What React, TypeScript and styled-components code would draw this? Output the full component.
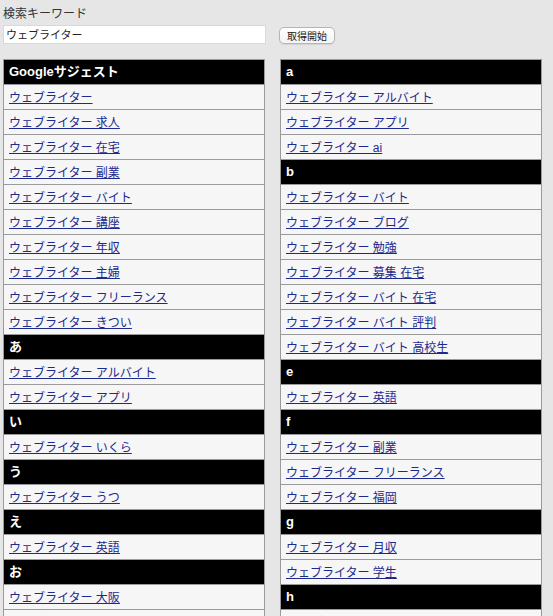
import React from "react";
import styled, { createGlobalStyle } from "styled-components";

const Global = createGlobalStyle`
  html, body { margin: 0; padding: 0; background: #e6e6e6; }
  body { font-family: "Liberation Sans", "Noto Sans CJK JP", sans-serif; color: #333; }
`;

const Page = styled.div`
  padding: 6px 3px 0 3px;
`;

const Label = styled.div`
  font-size: 12px;
  line-height: 16px;
  color: #333;
  margin-bottom: 2px;
`;

const SearchBar = styled.div`
  display: flex;
  align-items: center;
  gap: 13px;
`;

const Input = styled.input`
  box-sizing: border-box;
  width: 263px;
  height: 19px;
  border: 1px solid #d9d9d9;
  background: #fff;
  padding: 0 2px;
  font-family: "Liberation Sans", "Noto Sans CJK JP", sans-serif;
  font-size: 11px;
  color: #222;
  outline: none;
`;

const Button = styled.button`
  box-sizing: border-box;
  margin-top: 3px;
  width: 56px;
  height: 17px;
  padding: 0;
  border: 1px solid #b5b5b5;
  border-radius: 5px;
  background: linear-gradient(#ffffff, #f4f4f4);
  box-shadow: 0 1px 1px rgba(0, 0, 0, 0.08);
  font-family: "Liberation Sans", "Noto Sans CJK JP", sans-serif;
  font-size: 10px;
  color: #222;
`;

const Columns = styled.div`
  display: flex;
  align-items: flex-start;
  gap: 15px;
  margin-top: 15px;
`;

const Table = styled.div`
  box-sizing: border-box;
  width: 262px;
  border: 1px solid #9a9a9a;
  border-bottom: none;
`;

const Row = styled.div<{ $head?: boolean }>`
  box-sizing: border-box;
  height: 25px;
  line-height: 24px;
  padding: ${(p) => (p.$head ? "0 5px" : "1px 5px 0")};
  border-bottom: 1px solid #9a9a9a;
  background: ${(p) => (p.$head ? "#000" : "#f6f6f6")};
  color: ${(p) => (p.$head ? "#fff" : "#333")};
  font-size: ${(p) => (p.$head ? "13px" : "12px")};
  font-weight: ${(p) => (p.$head ? "bold" : "normal")};
  white-space: nowrap;
  overflow: hidden;
`;

const Link = styled.a`
  color: #1c2a8e;
  text-decoration: underline;
  text-underline-offset: 1px;
`;

type Item = { h?: string; t?: string };

const W = "ウェブライター";

const left: Item[] = [
  { h: "Googleサジェスト" },
  { t: "" },
  { t: " 求人" },
  { t: " 在宅" },
  { t: " 副業" },
  { t: " バイト" },
  { t: " 講座" },
  { t: " 年収" },
  { t: " 主婦" },
  { t: " フリーランス" },
  { t: " きつい" },
  { h: "あ" },
  { t: " アルバイト" },
  { t: " アプリ" },
  { h: "い" },
  { t: " いくら" },
  { h: "う" },
  { t: " うつ" },
  { h: "え" },
  { t: " 英語" },
  { h: "お" },
  { t: " 大阪" },
  { t: " 沖縄" },
];

const right: Item[] = [
  { h: "a" },
  { t: " アルバイト" },
  { t: " アプリ" },
  { t: " ai" },
  { h: "b" },
  { t: " バイト" },
  { t: " ブログ" },
  { t: " 勉強" },
  { t: " 募集 在宅" },
  { t: " バイト 在宅" },
  { t: " バイト 評判" },
  { t: " バイト 高校生" },
  { h: "e" },
  { t: " 英語" },
  { h: "f" },
  { t: " 副業" },
  { t: " フリーランス" },
  { t: " 福岡" },
  { h: "g" },
  { t: " 月収" },
  { t: " 学生" },
  { h: "h" },
  { t: " 働き方" },
];

const List = ({ items }: { items: Item[] }) => (
  <Table>
    {items.map((it, i) =>
      it.h !== undefined ? (
        <Row key={i} $head>
          {it.h}
        </Row>
      ) : (
        <Row key={i}>
          <Link href="#">{W + it.t}</Link>
        </Row>
      )
    )}
  </Table>
);

export default function App() {
  return (
    <>
      <Global />
      <Page>
        <Label>検索キーワード</Label>
        <SearchBar>
          <Input defaultValue="ウェブライター" />
          <Button>取得開始</Button>
        </SearchBar>
        <Columns>
          <List items={left} />
          <List items={right} />
        </Columns>
      </Page>
    </>
  );
}
